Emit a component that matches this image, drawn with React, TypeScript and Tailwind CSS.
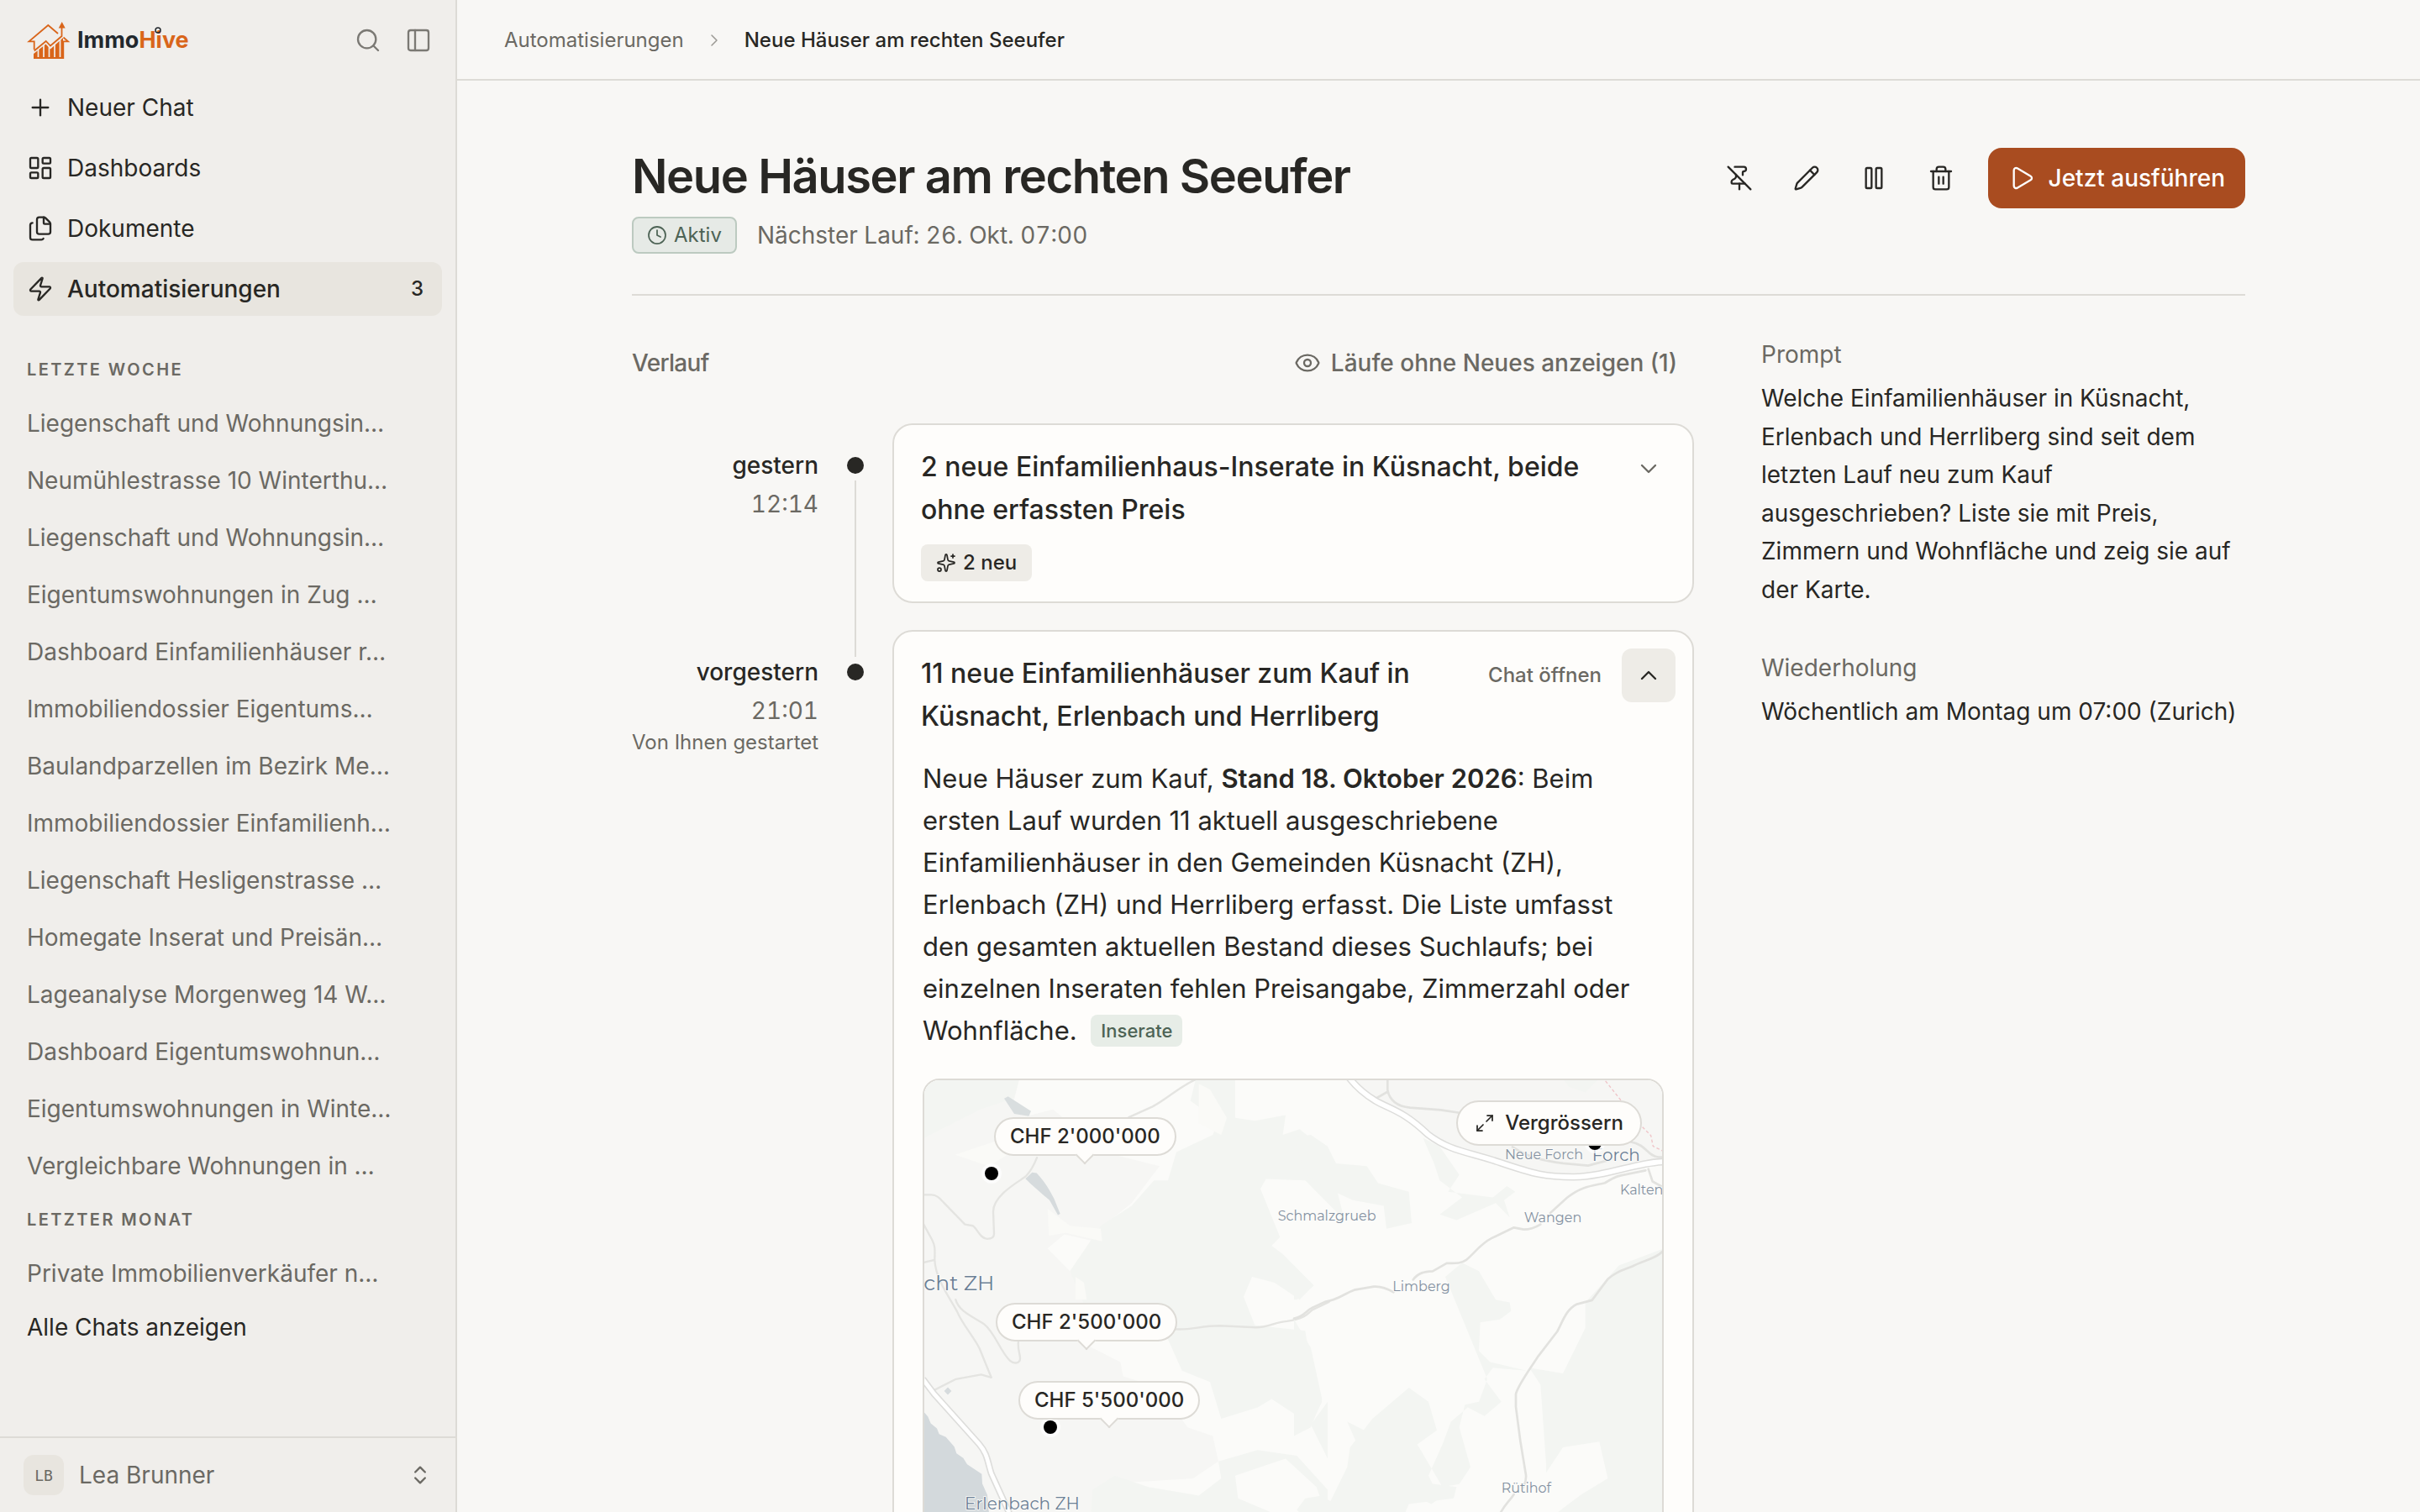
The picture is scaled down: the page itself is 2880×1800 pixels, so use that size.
import React, { useState } from 'react';
import {
  ChevronDown,
  ChevronRight,
  ChevronUp,
  ChevronsUpDown,
  Clock,
  Eye,
  Files,
  LayoutDashboard,
  Maximize2,
  PanelLeft,
  Pause,
  Pencil,
  PinOff,
  Play,
  Plus,
  Search,
  Sparkles,
  Trash2,
  Zap,
} from 'lucide-react';

const navItems = [
  { label: 'Neuer Chat', icon: Plus },
  { label: 'Dashboards', icon: LayoutDashboard },
  { label: 'Dokumente', icon: Files },
  { label: 'Automatisierungen', icon: Zap, count: 3, active: true },
];

const lastWeek = [
  'Liegenschaft und Wohnungsin…',
  'Neumühlestrasse 10 Winterthu…',
  'Liegenschaft und Wohnungsin…',
  'Eigentumswohnungen in Zug …',
  'Dashboard Einfamilienhäuser r…',
  'Immobiliendossier Eigentums…',
  'Baulandparzellen im Bezirk Me…',
  'Immobiliendossier Einfamilienh…',
  'Liegenschaft Hesligenstrasse …',
  'Homegate Inserat und Preisän…',
  'Lageanalyse Morgenweg 14 W…',
  'Dashboard Eigentumswohnun…',
  'Eigentumswohnungen in Winte…',
  'Vergleichbare Wohnungen in …',
];

const lastMonth = ['Private Immobilienverkäufer n…'];

const pricePins = [
  { price: "CHF 2'000'000", left: 83, top: 44 },
  { price: "CHF 2'500'000", left: 85, top: 265 },
  { price: "CHF 5'500'000", left: 112, top: 358 },
];

const dots = [
  { left: 72, top: 103 },
  { left: 142, top: 405 },
  { left: 790, top: 67 },
];

const Logo: React.FC = () => (
  <a href="#" className="flex items-center gap-2">
    <svg className="h-12 w-[52px]" viewBox="0 0 52 48" fill="none">
      <path d="M8 46V40L22.500 28.500 28 34.500 43 21V46z" fill="#d9651a" />
      <path d="M13.500 44V30M20 44V26M26.500 44V28M33 44V26M39.500 44V20" stroke="#f0eeeb" strokeWidth={1.700} />
      <path
        d="M8.700 35V25.300H2.500L25.300 6 37 16M43.500 20.500L49 25.300H43.300V45H8"
        stroke="#d9651a"
        strokeWidth={1.800}
      />
      <path d="M8.700 36.500L22.700 25 28 30.500 41.500 19V8" stroke="#d9651a" strokeWidth={1.800} />
      <path d="M37.700 9.500L41.700 2l4 7.500z" fill="#d9651a" />
    </svg>
    <span className="relative text-[27px] leading-8 font-bold text-[#22282d]">
      Immo<span className="text-[#d9651a]">Hive</span>
      <svg className="absolute top-0 left-[92px] size-2" viewBox="0 0 8 8" fill="none">
        <circle cx="4" cy="4" r="3" stroke="#22282d" strokeWidth={1.500} />
      </svg>
    </span>
  </a>
);

const ChatGroup: React.FC<{ title: string; chats: string[] }> = ({ title, chats }) => (
  <section>
    <h2 className="px-4 text-[20px] leading-[64px] font-semibold tracking-[0.12em] text-[#6b6963] uppercase">{title}</h2>
    <ul className="flex flex-col gap-1">
      {chats.map((chat, i) => (
        <li key={i}>
          <a href="#" className="block truncate px-4 text-[28px] leading-[64px] text-[#6b6963]">
            {chat}
          </a>
        </li>
      ))}
    </ul>
  </section>
);

const Sidebar: React.FC = () => (
  <aside className="flex w-[544px] shrink-0 flex-col border-r-2 border-[#dddbd6] bg-[#f0eeeb]">
    <div className="flex h-24 items-center justify-between pr-7 pl-8">
      <Logo />
      <div className="flex gap-7">
        <button type="button" aria-label="Suchen" className="text-[#7b7974]">
          <Search size={32} strokeWidth={1.75} />
        </button>
        <button type="button" aria-label="Seitenleiste" className="text-[#7b7974]">
          <PanelLeft size={32} strokeWidth={1.75} />
        </button>
      </div>
    </div>
    <nav className="flex flex-col gap-2 px-4">
      {navItems.map(({ label, icon: Icon, count, active }) => (
        <a
          key={label}
          href="#"
          className={
            active
              ? 'flex h-16 items-center gap-4 rounded-xl bg-[#e8e5df] px-4 text-[28px] font-medium'
              : 'flex h-16 items-center gap-4 rounded-xl px-4 text-[28px]'
          }
        >
          <Icon size={32} strokeWidth={1.75} />
          <span className="flex-1">{label}</span>
          {count && <span className="pr-[6px] text-[24px]">{count}</span>}
        </a>
      ))}
    </nav>
    <div className="flex flex-1 flex-col px-4 pt-8">
      <ChatGroup title="Letzte Woche" chats={lastWeek} />
      <ChatGroup title="Letzter Monat" chats={lastMonth} />
      <a href="#" className="px-4 text-[28px] leading-[64px]">
        Alle Chats anzeigen
      </a>
    </div>
    <button type="button" className="flex h-[90px] items-center gap-[18px] border-t-2 border-[#dddbd6] pr-7 pl-7 text-left text-[28px] text-[#6b6963]">
      <span className="flex size-12 items-center justify-center rounded-xl bg-[#e8e5df] font-['DejaVu_Sans_Mono',monospace] text-[18px]">
        LB
      </span>
      <span className="flex-1">Lea Brunner</span>
      <ChevronsUpDown size={28} strokeWidth={2} />
    </button>
  </aside>
);

const MapDrawing: React.FC = () => (
  <svg className="absolute inset-0 h-full w-full" viewBox="0 0 2634 1920" preserveAspectRatio="xMinYMin slice" fill="none">
    <rect width="2634" height="1920" fill="#fbfbf9" />
    {/* western half: lake, woods, Küsnacht and Erlenbach */}
    <g transform="translate(-60 -48) scale(1 1.014)">
      <path fill="#f6f6f4" d="M60 40H400L380 120 440 170 520 150 700 300 900 350 800 480 700 560 690 620 560 590 500 640 600 740 640 820 640 980 760 1040 770 1090 900 1130 1000 1270 1090 1300 1110 1390 1020 1450 700 1470 650 1968H60z" />
      <path fill="#f3f5f2" d="M60 40H400L380 110 260 150 60 250zM530 40H1030L1010 120 1110 190 1090 240 960 300 930 400 880 400 800 490 690 560 580 720 640 860 780 900 930 960 980 1070 1080 1110 1120 1240 1250 1200 1300 1170 1440 1260 1480 1180 1440 1050 1420 930 1240 910 1200 810 1230 740 1310 760 1400 820 1450 770 1340 660 1300 630 1330 600 1260 430 1280 395 1420 400 1560 540 1500 300 1400 220 1340 240 1350 170 1240 190 1170 180 1170 40z" />
      <path fill="#f3f5f2" d="M1110 1390l140-40 140 20 110 120v380H640l20-380 80-50 120 40 180 30 80-60zM1440 1260l60-80v200z" />
      <path fill="#fbfbf9" d="M1170 1440l180-60 110 100 40 110-200-20-120-50z" />
      <path fill="#fafaf7" d="M500 500l80 60 110 10 5 45-130-30-60 10zM600 740l30 20 10 60h-40zM170 310l180-60 40 40-100 60zM1040 60l40 20 60 100-20 60-80-40z" />
      <path fill="#d9dedf" d="M345 112l14-8 82 52-8 18-52-8z" />
      <path fill="#d6dbdd" d="M421 394l24-22 16 2c30 30 50 66 62 90l22 54-8 4-30-52c-30-26-60-50-86-76zM131 1142l13-13 13 13-13 13z" />
      <path
        fill="#d3d9dc"
        d="M55 1212l18 20 10 24 22 18 8 20 24 10 30 34 8 24 24 16 14 22 52 34 2 34 18 40 4 50 30 150 60 140 40 140H55z"
      />
      <g stroke="#e4e4e1" strokeWidth={7} strokeLinejoin="round" strokeLinecap="round">
        <path d="M55 451h30c20 0 30 12 45 28l75 76 28 5c15 8 26 46 52 46 16 0 24-6 24-18l-3-78c0-60 100-110 116-124 20-20 30-40 40-66" />
        <path d="M790 178l85-38c50-25 100-74 160-98" />
        <path d="M55 550l32 58c14 26 10 40 10 74 4 70 60 140 80 180 20 46 60 90 80 130l42 102-36-10-90 16-76 38M55 690l42-10M172 820c10 40 60 60 100 85 40 30 60 100 94 130 16 14 36 8 36-8 0-20-10-30-6-62" />
        <path d="M955 924c60 4 90-12 160-12l130 6c50 0 60-18 110-22 60-8 75-26 90-40l60-28" />
      </g>
      <path stroke="#dddddb" strokeWidth={24} d="M55 1100l40 52 160 176c30 34 30 60 44 104l60 130 80 200" />
      <path stroke="#ffffff" strokeWidth={14} d="M55 1100l40 52 160 176c30 34 30 60 44 104l60 130 80 200" />
    </g>
    {/* eastern half: motorway, Forch, Limberg */}
    <g transform="translate(1320 -48) scale(1 1.014)">
      <path fill="#f6f6f4" d="M190 40H1320V330L1100 370 920 380 700 320 540 270 420 180 280 120z" />
      <path fill="#f3f5f2" d="M0 250l60-10 60 40 30 60 110 10 40 60 110 30 10 110-90 20-10-80-110-20-110-50-60-40zM460 250l60 30 70 100-40 60 160 20 50-40 30 20-40 30 20 60-50-50-140 60-60-20 80-60-80-60-20-60zM960 40h130l-50 50-60-20zM540 740l60-50 60 30 60 100 50 10 5 30-40 30-70 10-5 100 40 40 130 30-120-10-30 40 60 80-60 50-60-30-60 50-30 80-50 110 40 80 -30 20-120-60-20-60-40-30-80 80v120l-60 100 20 60-80 60-70-110 20-80-50-60 30-40 60-10 30 20 60-120 10-70 80-100 130-110 70 50 30 100-70 50 90 150 60-10 40-60-40-140 20-80 50-10 30-80z" />
      <path fill="#f3f5f2" d="M0 890l60 100 40 180-40 100-60 30zM0 700l70 70-60 50H0z" />
      <path fill="#f3f5f2" d="M1320 640v1330H900l40-400 80-60 100-60-30-130-130 20-60 90V1400l-20-280-40-60 120 20 80-160V830l120-130z" />
      <path fill="#f3f5f2" d="M190 1250l120 60 90 90 30 60 150 20-10 40-160 20-130 300L90 1968 90 1560l180-130z" />
      <g stroke="#e2e2df" strokeWidth={8} strokeLinejoin="round" strokeLinecap="round">
        <path d="M0 886c40-8 40-26 66-38l44-20c50-8 70-30 105-42l70-12c30-2 60 14 70 20M425 750c20-26 40-28 70-30l50-28c30 0 50 2 70-12 30-24 50-56 90-76l80-38 35 7c25 0 50-12 60-18M915 515l60-54c50-40 90-42 135-52 40-24 50-26 75-30l70-14M1320 646c-30 32-70 34-110 56-40 16-60 20-90 46l-56 74-54 14c-40 20-50 60-70 96l-70 90c-40 60-70 100-78 130v46l16 120 20 120c2 30-6 30-14 52M785 1506c-20 30-40 40-60 90" />
        <path d="M334 40v42c6 30 24 56 80 62l110 8 66 10M334 88l-46 26M1200 264c60 10 60 50 100 54h20M780 282c60 40 120 50 180 58l90 8 76-20M1265 360l15 44 30 16" />
      </g>
      <path stroke="#dddddb" strokeWidth={26} d="M190 30c30 40 58 64 98 88 60 34 100 36 190 120 80 60 140 60 260 100 120 40 160 50 260 50 120-2 230-54 330-54" />
      <path stroke="#ffffff" strokeWidth={17} d="M190 30c30 40 58 64 98 88 60 34 100 36 190 120 80 60 140 60 260 100 120 40 160 50 260 50 120-2 230-54 330-54" />
      <path stroke="#efc4c8" strokeWidth={4} strokeDasharray="11 8" d="M1112 50l60 74 70 86 32 32 8 38 38 18" />
    </g>
    <g className="font-['Montserrat','Inter',sans-serif]" fill="#8491a1" fontSize={48} stroke="#fbfbf9" strokeWidth={5} paintOrder="stroke">
      <text x="1262" y="501">Schmalzgrueb</text>
      <text x="2073" y="282">Neue Forch</text>
      <text x="2484" y="408">Kalten</text>
      <text x="2141" y="508">Wangen</text>
      <text x="1672" y="753">Limberg</text>
      <text x="2060" y="1473">Rütihof</text>
      <g fill="#6b8095">
        <text x="2384" y="287" fontSize={60}>Forch</text>
        <text x="144" y="1534" fontSize={60}>Erlenbach ZH</text>
        <text x="-2" y="750" fontSize={75}>cht ZH</text>
      </g>
    </g>
  </svg>
);

const ListingsMap: React.FC = () => (
  <div className="relative h-[640px] overflow-hidden rounded-[20px] border-2 border-[#dddbd6]">
    <MapDrawing />
    {dots.map((dot) => (
      <span
        key={dot.left}
        className="absolute size-4 rounded-full bg-black ring-4 ring-white/70"
        style={{ left: dot.left, top: dot.top }}
      />
    ))}
    {pricePins.map((pin) => (
      <button
        key={pin.price}
        type="button"
        className="absolute flex h-[46px] items-center rounded-full border-2 border-[#dddbd6] bg-[#fefdfb] px-[17px] text-[24px] font-medium"
        style={{ left: pin.left, top: pin.top }}
      >
        <span className="absolute -bottom-[9px] left-1/2 size-4 -translate-x-1/2 rotate-45 border-r-2 border-b-2 border-[#dddbd6] bg-[#fefdfb]" />
        <span className="relative">{pin.price}</span>
      </button>
    ))}
    <button
      type="button"
      className="absolute top-6 right-6 flex h-[54px] items-center gap-3 rounded-full border-2 border-[#dddbd6] bg-[#fefdfb] px-5 text-[24px] font-medium"
    >
      <Maximize2 size={24} strokeWidth={1.75} />
      Vergrössern
    </button>
  </div>
);

type RunProps = {
  day: string;
  time: string;
  note?: string;
  last?: boolean;
  children: React.ReactNode;
};

const Run: React.FC<RunProps> = ({ day, time, note, last, children }) => (
  <li className="flex gap-8">
    <div className="w-[222px] shrink-0 pt-[26px] text-right text-[28px] text-[#6b6963]">
      <p className="leading-12 font-medium text-[#282724]">{day}</p>
      <p className="leading-11 tabular-nums">{time}</p>
      {note && <p className="text-[24px] leading-8 whitespace-nowrap">{note}</p>}
    </div>
    <div className="flex w-6 shrink-0 flex-col items-center gap-2 pt-10">
      <span className="size-5 shrink-0 rounded-full bg-[#282724]" />
      {!last && <span className="-mb-8 w-[2px] flex-1 bg-[#dddbd6]" />}
    </div>
    <article className={last ? 'min-w-0 flex-1 rounded-3xl border-2 border-[#dddbd6] bg-[#fefdfb]' : 'mb-8 min-w-0 flex-1 rounded-3xl border-2 border-[#dddbd6] bg-[#fefdfb]'}>
      {children}
    </article>
  </li>
);

const History: React.FC = () => {
  const [open, setOpen] = useState(true);

  return (
    <section className="min-w-0 flex-1">
      <div className="flex h-16 items-center justify-between pr-5 text-[28px] font-medium text-[#6b6963]">
        <h2 className="tracking-tight">Verlauf</h2>
        <button type="button" className="flex items-center gap-3">
          <Eye size={32} strokeWidth={1.75} />
          Läufe ohne Neues anzeigen (1)
        </button>
      </div>
      <ol className="pt-10">
        <Run day="gestern" time="12:14">
          <div className="flex items-start justify-between gap-6 pt-5 pr-5 pl-8">
            <h3 className="pt-1 text-[32px] leading-[51px] font-medium">
              2 neue Einfamilienhaus-Inserate in Küsnacht, beide ohne erfassten Preis
            </h3>
            <button type="button" aria-label="Aufklappen" className="flex size-16 shrink-0 items-center justify-center text-[#6b6963]">
              <ChevronDown size={32} strokeWidth={1.75} />
            </button>
          </div>
          <div className="flex px-8 pt-4 pb-6">
            <span className="flex h-11 items-center gap-2 rounded-lg bg-[#eeece7] px-[18px] text-[24px] font-medium">
              <Sparkles size={24} strokeWidth={1.75} />2 neu
            </span>
          </div>
        </Run>
        <Run day="vorgestern" time="21:01" note="Von Ihnen gestartet" last>
          <div className="flex items-start gap-6 pt-5 pr-5 pl-8">
            <h3 className="flex-1 pt-1 text-[32px] leading-[51px] font-medium">
              11 neue Einfamilienhäuser zum Kauf in Küsnacht, Erlenbach und Herrliberg
            </h3>
            <a href="#" className="text-[24px] leading-[64px] font-medium whitespace-nowrap text-[#6b6963]">
              Chat öffnen
            </a>
            <button
              type="button"
              aria-label="Zuklappen"
              onClick={() => setOpen(!open)}
              className="flex size-16 shrink-0 items-center justify-center rounded-xl bg-[#eeece7]"
            >
              <ChevronUp size={32} strokeWidth={1.75} />
            </button>
          </div>
          {open && (
            <div className="px-[34px] pt-6 pb-8">
              <p className="pb-8 text-[31px] leading-[50px]">
                Neue Häuser zum Kauf, <strong className="font-semibold">Stand 18. Oktober 2026</strong>: Beim ersten Lauf
                wurden 11 aktuell ausgeschriebene Einfamilienhäuser in den Gemeinden Küsnacht (ZH), Erlenbach (ZH) und
                Herrliberg erfasst. Die Liste umfasst den gesamten aktuellen Bestand dieses Suchlaufs; bei einzelnen
                Inseraten fehlen Preisangabe, Zimmerzahl oder Wohnfläche.{' '}
                <a href="#" className="ml-2 inline-block rounded-lg bg-[#e7ede7] px-3 align-[3px] text-[22px] leading-[38px] font-medium text-[#4d6355]">
                  Inserate
                </a>
              </p>
              <ListingsMap />
            </div>
          )}
        </Run>
      </ol>
    </section>
  );
};

const App: React.FC = () => {
  return (
    <div className="flex h-screen overflow-hidden bg-[#f8f7f5] font-['Inter',sans-serif] text-[#282724]">
      <Sidebar />
      <div className="flex min-w-0 flex-1 flex-col">
        <header className="flex h-24 shrink-0 items-center gap-6 border-b-2 border-[#dddbd6] px-14 pt-[2px] text-[24px]">
          <a href="#" className="text-[#6b6963]">
            Automatisierungen
          </a>
          <ChevronRight size={24} strokeWidth={1.5} className="text-[#9b9994]" />
          <span className="font-medium">Neue Häuser am rechten Seeufer</span>
        </header>
        <main className="flex-1 overflow-y-auto px-8 [scrollbar-width:none]">
          <div className="mx-auto max-w-[1920px] pt-20">
            <div className="flex items-start justify-between border-b-2 border-[#dddbd6] pb-12">
              <div>
                <h1 className="text-[56px] leading-[68px] font-semibold tracking-tight">Neue Häuser am rechten Seeufer</h1>
                <div className="flex items-center gap-6 pt-[14px]">
                  <span className="flex h-11 items-center gap-2 rounded-lg border-2 border-[#bccac0] bg-[#e6eae6] px-4 text-[24px] text-[#4d6355]">
                    <Clock size={24} strokeWidth={1.75} />
                    Aktiv
                  </span>
                  <span className="text-[28px] text-[#6b6963] tabular-nums">Nächster Lauf: 26. Okt. 07:00</span>
                </div>
              </div>
              <div className="flex items-center gap-12">
                <button type="button" aria-label="Lösen">
                  <PinOff size={32} strokeWidth={1.75} />
                </button>
                <button type="button" aria-label="Bearbeiten">
                  <Pencil size={32} strokeWidth={1.75} />
                </button>
                <button type="button" aria-label="Pausieren">
                  <Pause size={32} strokeWidth={1.75} />
                </button>
                <button type="button" aria-label="Löschen">
                  <Trash2 size={32} strokeWidth={1.75} />
                </button>
                <button type="button" className="-ml-2 flex h-[72px] items-center gap-4 rounded-2xl bg-[#a94c20] px-6 text-[28px] font-medium text-white">
                  <Play size={32} strokeWidth={1.75} />
                  Jetzt ausführen
                </button>
              </div>
            </div>
            <div className="flex gap-20 pt-12">
              <History />
              <aside className="w-[576px] shrink-0 text-[28px]">
                <h2 className="leading-11 text-[#6b6963]">Prompt</h2>
                <p className="pt-2 leading-relaxed">
                  Welche Einfamilienhäuser in Küsnacht, Erlenbach und Herrliberg sind seit dem letzten Lauf neu zum Kauf
                  ausgeschrieben? Liste sie mit Preis, Zimmern und Wohnfläche und zeig sie auf der Karte.
                </p>
                <h2 className="pt-12 leading-11 text-[#6b6963]">Wiederholung</h2>
                <p className="pt-2 leading-relaxed">Wöchentlich am Montag um 07:00 (Zurich)</p>
              </aside>
            </div>
          </div>
        </main>
      </div>
    </div>
  );
};

export default App;
